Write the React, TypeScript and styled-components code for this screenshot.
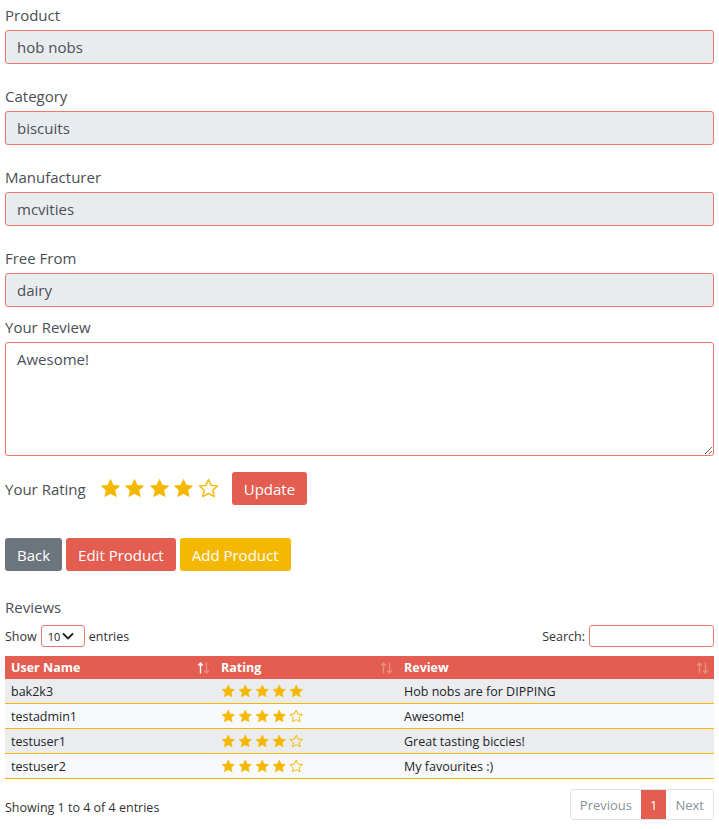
import React from 'react';
import styled, { createGlobalStyle } from 'styled-components';

const RED = '#e35d50';
const YELLOW = '#f5b800';
const FIELD_BORDER = '#e9796d';

const GlobalStyle = createGlobalStyle`
    body {
        margin: 0;
        background: #fff;
        font-family: 'Open Sans', 'Liberation Sans', sans-serif;
        color: #495057;
    }
`;

const Page = styled.div`
    padding: 3px 5px 10px;
`;

const FormGroup = styled.div<{ $spacing?: number }>`
    margin-bottom: ${p => (p.$spacing ?? 20)}px;
`;

const Label = styled.label`
    display: block;
    font-size: 15px;
    line-height: 24px;
    margin-bottom: 3px;
    color: #4a4f55;
`;

const Field = styled.input`
    display: block;
    box-sizing: border-box;
    width: 100%;
    height: 34px;
    padding: 0 11px;
    font-family: inherit;
    font-size: 15px;
    color: #495057;
    background: #e9ecef;
    border: 1px solid ${FIELD_BORDER};
    border-radius: 3px;
    outline: none;
`;

const ReviewArea = styled.textarea`
    display: block;
    box-sizing: border-box;
    width: 100%;
    height: 114px;
    padding: 6px 11px;
    font-family: inherit;
    font-size: 15px;
    color: #495057;
    background: #fff;
    border: 1px solid ${FIELD_BORDER};
    border-radius: 3px;
    outline: none;
    resize: vertical;
`;

const RatingRow = styled.div`
    display: flex;
    align-items: center;
    margin-top: 16px;
    height: 33px;
`;

const RatingLabel = styled.span`
    font-size: 15px;
    color: #4a4f55;
    margin-right: 14px;
`;

const Stars = styled.div<{ $gap: number }>`
    display: flex;
    align-items: center;
    gap: ${p => p.$gap}px;
`;

const Button = styled.button<{ $variant: 'red' | 'yellow' | 'grey' }>`
    height: 33px;
    padding: 0 12px;
    font-family: inherit;
    font-size: 15px;
    color: #fff;
    border: none;
    border-radius: 3px;
    cursor: pointer;
    background: ${p =>
        p.$variant === 'red' ? RED : p.$variant === 'yellow' ? YELLOW : '#6c757d'};
`;

const UpdateButton = styled(Button)`
    margin-left: 13px;
`;

const ButtonRow = styled.div`
    display: flex;
    gap: 4px;
    margin-top: 33px;
`;

const SectionTitle = styled.div`
    margin-top: 24px;
    font-size: 15px;
    line-height: 24px;
    color: #4a4f55;
`;

const Controls = styled.div`
    display: flex;
    justify-content: space-between;
    align-items: center;
    height: 24px;
    margin-top: 5px;
    font-size: 12.5px;
    color: #333;
`;

const Inline = styled.div`
    display: flex;
    align-items: center;
    gap: 4px;
`;

const LengthSelect = styled.div`
    display: flex;
    align-items: center;
    box-sizing: border-box;
    width: 44px;
    height: 22px;
    padding: 0 6px;
    gap: 1px;
    font-size: 11px;
    color: #222;
    border: 1px solid ${FIELD_BORDER};
    border-radius: 3px;
`;

const SearchBox = styled.input`
    box-sizing: border-box;
    width: 125px;
    height: 22px;
    border: 1px solid ${FIELD_BORDER};
    border-radius: 3px;
    outline: none;
`;

const Table = styled.table`
    width: 100%;
    margin-top: 8px;
    border-collapse: collapse;
    font-size: 12.5px;
    color: #212529;
`;

const HeadCell = styled.th<{ $width?: number }>`
    position: relative;
    height: 23px;
    padding: 0 6px;
    text-align: left;
    font-weight: 700;
    color: #fff;
    background: ${RED};
    width: ${p => (p.$width ? `${p.$width}px` : 'auto')};
    box-sizing: border-box;
`;

const SortIcon = styled.svg`
    position: absolute;
    right: 5px;
    top: 50%;
    transform: translateY(-50%);
`;

const Row = styled.tr<{ $odd: boolean }>`
    background: ${p => (p.$odd ? '#ebecee' : '#f8f9fa')};
    border-bottom: 1px solid ${YELLOW};
`;

const Cell = styled.td`
    height: 24px;
    padding: 0 6px;
`;

const Footer = styled.div`
    display: flex;
    justify-content: space-between;
    align-items: flex-end;
    margin-top: 10px;
    font-size: 12.5px;
    color: #333;
`;

const FooterInfo = styled.span`
    padding-bottom: 4px;
`;

const Pager = styled.div`
    display: flex;
    height: 29px;
    border: 1px solid #dee2e6;
    border-radius: 3px;
    overflow: hidden;
`;

const PageItem = styled.span<{ $active?: boolean }>`
    display: flex;
    align-items: center;
    padding: 0 9px;
    font-size: 13px;
    color: ${p => (p.$active ? '#fff' : '#8a9299')};
    background: ${p => (p.$active ? RED : '#fff')};
`;

const STAR_PATH =
    'M12 1.8l3.05 6.6 7.2.8-5.35 4.9 1.5 7.1L12 17.6l-6.4 3.6 1.5-7.1L1.75 9.2l7.2-.8z';

const Star: React.FC<{ filled: boolean; size: number }> = ({ filled, size }) => (
    <svg width={size} height={size} viewBox="0 0 24 24">
        <path
            d={STAR_PATH}
            fill={filled ? YELLOW : 'none'}
            stroke={YELLOW}
            strokeWidth={filled ? 1 : 1.6}
            strokeLinejoin="round"
        />
    </svg>
);

const StarRating: React.FC<{ value: number; size: number; gap: number }> = ({ value, size, gap }) => (
    <Stars $gap={gap}>
        {[1, 2, 3, 4, 5].map(i => (
            <Star key={i} filled={i <= value} size={size} />
        ))}
    </Stars>
);

const SortArrows: React.FC<{ active?: boolean }> = ({ active }) => (
    <SortIcon width="13" height="13" viewBox="0 0 13 13">
        <g fill="none" stroke="#fff" strokeWidth="1.4" opacity={active ? 1 : 0.3}>
            <path d="M3.5 12V1.5M1.2 4L3.5 1.5 5.8 4" />
        </g>
        <g fill="none" stroke="#fff" strokeWidth="1.4" opacity={0.3}>
            <path d="M9.5 1V11.5M7.2 9l2.3 2.5 2.3-2.5" />
        </g>
    </SortIcon>
);

const Chevron = () => (
    <svg width="14" height="10" viewBox="0 0 14 10">
        <path d="M2 2.5l5 5 5-5" fill="none" stroke="#222" strokeWidth="1.8" />
    </svg>
);

const fields = [
    { label: 'Product', value: 'hob nobs' },
    { label: 'Category', value: 'biscuits' },
    { label: 'Manufacturer', value: 'mcvities' },
    { label: 'Free From', value: 'dairy' },
];

const reviews = [
    { user: 'bak2k3', rating: 5, text: 'Hob nobs are for DIPPING' },
    { user: 'testadmin1', rating: 4, text: 'Awesome!' },
    { user: 'testuser1', rating: 4, text: 'Great tasting biccies!' },
    { user: 'testuser2', rating: 4, text: 'My favourites :)' },
];

export default function App() {
    return (
        <Page>
            <GlobalStyle />
            {fields.map((f, i) => (
                <FormGroup key={f.label} $spacing={i === fields.length - 1 ? 8 : 20}>
                    <Label>{f.label}</Label>
                    <Field readOnly value={f.value} />
                </FormGroup>
            ))}

            <Label>Your Review</Label>
            <ReviewArea defaultValue="Awesome!" />

            <RatingRow>
                <RatingLabel>Your Rating</RatingLabel>
                <StarRating value={4} size={21} gap={3.5} />
                <UpdateButton $variant="red">Update</UpdateButton>
            </RatingRow>

            <ButtonRow>
                <Button $variant="grey">Back</Button>
                <Button $variant="red">Edit Product</Button>
                <Button $variant="yellow">Add Product</Button>
            </ButtonRow>

            <SectionTitle>Reviews</SectionTitle>
            <Controls>
                <Inline>
                    Show
                    <LengthSelect>
                        10
                        <Chevron />
                    </LengthSelect>
                    entries
                </Inline>
                <Inline>
                    Search:
                    <SearchBox />
                </Inline>
            </Controls>

            <Table>
                <thead>
                    <tr>
                        <HeadCell $width={210}>
                            User Name
                            <SortArrows active />
                        </HeadCell>
                        <HeadCell $width={183}>
                            Rating
                            <SortArrows />
                        </HeadCell>
                        <HeadCell>
                            Review
                            <SortArrows />
                        </HeadCell>
                    </tr>
                </thead>
                <tbody>
                    {reviews.map((r, i) => (
                        <Row key={r.user} $odd={i % 2 === 0}>
                            <Cell>{r.user}</Cell>
                            <Cell>
                                <StarRating value={r.rating} size={14.5} gap={2.5} />
                            </Cell>
                            <Cell>{r.text}</Cell>
                        </Row>
                    ))}
                </tbody>
            </Table>

            <Footer>
                <FooterInfo>Showing 1 to 4 of 4 entries</FooterInfo>
                <Pager>
                    <PageItem>Previous</PageItem>
                    <PageItem $active>1</PageItem>
                    <PageItem>Next</PageItem>
                </Pager>
            </Footer>
        </Page>
    );
}
